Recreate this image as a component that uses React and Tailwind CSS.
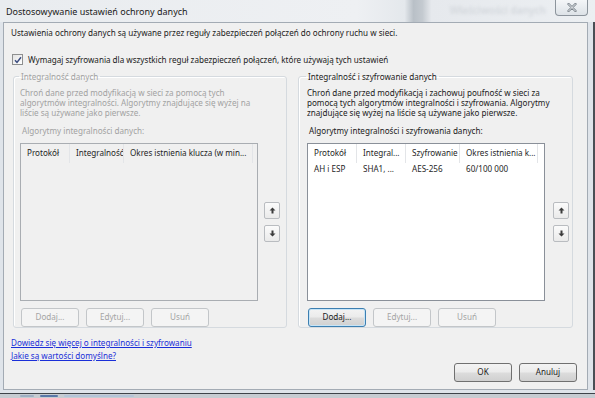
import { useState } from "react";

const leftCols = [
  { label: "Protokół", w: "w-[49px]" },
  { label: "Integralność", w: "w-[54px]" },
  { label: "Okres istnienia klucza (w min...", w: "w-[129px]" },
];

const rightCols = [
  { label: "Protokół", w: "w-[49px]" },
  { label: "Integral...", w: "w-[49px]" },
  { label: "Szyfrowanie", w: "w-[54px]" },
  { label: "Okres istnienia k...", w: "w-[78px]" },
];

const rightRows = [["AH i ESP", "SHA1, ...", "AES-256", "60/100 000"]];

function WinButton({ children, disabled, focused, className = "" }) {
  let look =
    "border-[#707070] text-[#1b1b1b] bg-[linear-gradient(#f3f3f3_0%,#ebebeb_48%,#dcdcdc_52%,#d0d0d0_100%)]";
  if (disabled) look = "border-[#c3c6c9] text-[#a4a4a4] bg-[#f4f4f4]";
  if (focused)
    look =
      "border-[#3c7fb1] text-[#1b1b1b] shadow-[inset_0_0_0_1px_#c6e4f7] bg-[linear-gradient(#f3f3f3_0%,#ebebeb_48%,#dcdcdc_52%,#d0d0d0_100%)]";
  return (
    <div
      className={`flex h-[19px] items-center justify-center rounded-[3px] border ${look} ${className}`}
    >
      {children}
    </div>
  );
}

function ArrowButton({ down }) {
  return (
    <div className="flex h-[17px] w-[16px] items-center justify-center rounded-[2px] border border-[#b9bcc0] bg-[linear-gradient(#fbfbfb,#eaeaea)]">
      <svg width="7" height="7" viewBox="0 0 7 7" className={down ? "rotate-180" : ""}>
        <path d="M3.5 0.5 L6.5 3.5 L4.5 3.5 L4.5 6.5 L2.5 6.5 L2.5 3.5 L0.5 3.5 Z" fill="#3c3c3c" />
      </svg>
    </div>
  );
}

function ListBox({ cols, rows, disabled }) {
  return (
    <div
      className={`flex h-[158px] w-[238px] flex-col border ${
        disabled ? "border-[#a9adb2] bg-[#f0f0f0]" : "border-[#8a9099] bg-white"
      }`}
    >
      <div className="flex h-[19px] items-center text-[#1f1f1f]">
        {cols.map((c) => (
          <div
            key={c.label}
            className={`${c.w} flex h-full shrink-0 items-center overflow-hidden whitespace-nowrap border-r border-[#e3e5e8] pl-[6px]`}
          >
            {c.label}
          </div>
        ))}
      </div>
      {rows.map((r) => (
        <div key={r[0]} className="flex h-[13px] items-center text-[#1f1f1f]">
          {r.map((cell, i) => (
            <div key={i} className={`${cols[i].w} shrink-0 whitespace-nowrap pl-[6px]`}>
              {cell}
            </div>
          ))}
        </div>
      ))}
    </div>
  );
}

function GroupBox({ title, disabled, desc, listLabel, cols, rows, widthCls, padCls, btnGap }) {
  const [focus] = useState(!disabled);
  const tone = disabled ? "text-[#a2a2a2]" : "text-[#1b1b1b]";
  return (
    <fieldset
      className={`${widthCls} h-[257px] rounded-[3px] border border-[#d5dadf] ${padCls} pb-0 shadow-[inset_1px_1px_0_#fff]`}
    >
      <legend className={`-ml-[1px] px-[2px] leading-[11px] ${tone}`}>{title}</legend>
      <div className={`mt-[6px] leading-[10px] ${tone}`}>
        {desc.map((line) => (
          <p key={line} className="whitespace-nowrap">
            {line}
          </p>
        ))}
      </div>
      <p className={`mt-[8px] pl-[2px] leading-[10px] ${tone}`}>{listLabel}</p>
      <div className="mt-[7px] flex items-center">
        <ListBox cols={cols} rows={rows} disabled={disabled} />
        <div className={`flex flex-col gap-[6px] ${btnGap}`}>
          <ArrowButton />
          <ArrowButton down />
        </div>
      </div>
      <div className="mt-[7px] flex gap-[7px] pl-[1px]">
        <WinButton disabled={disabled} focused={focus} className="w-[58px]">
          Dodaj...
        </WinButton>
        <WinButton disabled className="w-[58px]">
          Edytuj...
        </WinButton>
        <WinButton disabled className="w-[58px]">
          Usuń
        </WinButton>
      </div>
    </fieldset>
  );
}

export default function App() {
  return (
    <div className="flex h-[398px] w-[595px] flex-col overflow-hidden bg-[#dfe4ea] font-['Noto_Sans',sans-serif] text-[8.1px] text-[#1b1b1b]">
      {/* ================= TITLE BAR ================= */}
      <div className="flex h-[22px] shrink-0 items-start bg-[linear-gradient(90deg,#e9ecef_0%,#eef0f3_60%,#e4e8ec_68%,#b9c0c7_69.5%,#c4cad0_71%,#e6e9ed_72.5%,#eceff2_100%)]">
        <div className="pl-[6px] pt-[5px] text-[9px] leading-[13px] text-[#202020]">
          Dostosowywanie ustawień ochrony danych
        </div>
        <div className="ml-[262px] mt-[4px] text-[10px] font-semibold leading-[13px] text-[#d3d7dc] blur-[1.4px]">
          Właściwości danych
        </div>
        <div className="ml-auto mr-[7px] flex h-[16px] w-[33px] items-center justify-center rounded-b-[4px] border border-t-0 border-[#8c949c] bg-[linear-gradient(#f4f6f8,#dde2e7)]">
          <svg width="10" height="9" viewBox="0 0 10 9">
            <path d="M1.5 1 L8.5 8 M8.5 1 L1.5 8" stroke="#7c848c" strokeWidth="2.4" strokeLinecap="round" />
            <path d="M1.5 1 L8.5 8 M8.5 1 L1.5 8" stroke="#f4f6f8" strokeWidth="0.9" strokeLinecap="round" />
          </svg>
        </div>
      </div>

      {/* ================= BODY ================= */}
      <div className="flex h-[368px] shrink-0">
        <div className="w-[3px] shrink-0" />
        <div className="flex w-[585px] shrink-0 flex-col border border-[#a3abb4] bg-[#f0f0f0]">
          <p className="pl-[7px] pt-[4px] leading-[11px]">
            Ustawienia ochrony danych są używane przez reguły zabezpieczeń połączeń do ochrony ruchu w sieci.
          </p>

          <div className="mt-[16px] flex items-center gap-[5px] pl-[8px] leading-[11px]">
            <div className="flex h-[11px] w-[11px] items-center justify-center border border-[#8e8f8f] bg-[linear-gradient(135deg,#e2e2e2,#ffffff)]">
              <svg width="8" height="8" viewBox="0 0 8 8">
                <path d="M1 4.2 L3 6.4 L7 1.2" fill="none" stroke="#3b4d80" strokeWidth="1.5" />
              </svg>
            </div>
            <span>
              Wymagaj szyfrowania dla wszystkich reguł zabezpieczeń połączeń, które używają tych ustawień
            </span>
          </div>

          {/* GROUPS */}
          <div className="mt-[6px] flex gap-[11px] pl-[9px]">
            <GroupBox
              disabled
              title="Integralność danych"
              desc={[
                "Chroń dane przed modyfikacją w sieci za pomocą tych",
                "algorytmów integralności. Algorytmy znajdujące się wyżej na",
                "liście są używane jako pierwsze.",
              ]}
              listLabel="Algorytmy integralności danych:"
              cols={leftCols}
              rows={[]}
              widthCls="w-[274px]"
              padCls="pl-[6px]"
              btnGap="ml-[6px]"
            />
            <GroupBox
              title="Integralność i szyfrowanie danych"
              desc={[
                "Chroń dane przed modyfikacją i zachowuj poufność w sieci za",
                "pomocą tych algorytmów integralności i szyfrowania. Algorytmy",
                "znajdujące się wyżej na liście są używane jako pierwsze.",
              ]}
              listLabel="Algorytmy integralności i szyfrowania danych:"
              cols={rightCols}
              rows={rightRows}
              widthCls="w-[275px]"
              padCls="pl-[8px]"
              btnGap="ml-[8px]"
            />
          </div>

          {/* LINKS + DIALOG BUTTONS */}
          <div className="flex flex-1 justify-between pb-[7px] pl-[7px] pr-[10px]">
            <div className="mt-[8px] flex flex-col leading-[13px] text-[#1a2fd8]">
              <span className="underline">Dowiedz się więcej o integralności i szyfrowaniu</span>
              <span className="underline">Jakie są wartości domyślne?</span>
            </div>
            <div className="flex items-end gap-[7px]">
              <WinButton className="w-[58px]">OK</WinButton>
              <WinButton className="w-[58px]">Anuluj</WinButton>
            </div>
          </div>
        </div>
        <div className="flex flex-1 justify-end">
          <div className="w-[2px] bg-[#4a4f55]" />
        </div>
      </div>

      {/* ================= BOTTOM FRAME ================= */}
      <div className="flex flex-1 flex-col">
        <div className="h-[3px]" />
        <div className="h-[1px] bg-[#3f444a]" />
        <div className="flex flex-1 items-center gap-[6px] bg-[#c7ccd2] pl-[20px]">
          <div className="h-[2px] w-[14px] rounded bg-[#9fb0c4]" />
          <div className="h-[2px] w-[18px] rounded bg-[#5a78a8]" />
          <div className="h-[2px] w-[70px] rounded bg-[#b4c4d8]" />
        </div>
      </div>
    </div>
  );
}
